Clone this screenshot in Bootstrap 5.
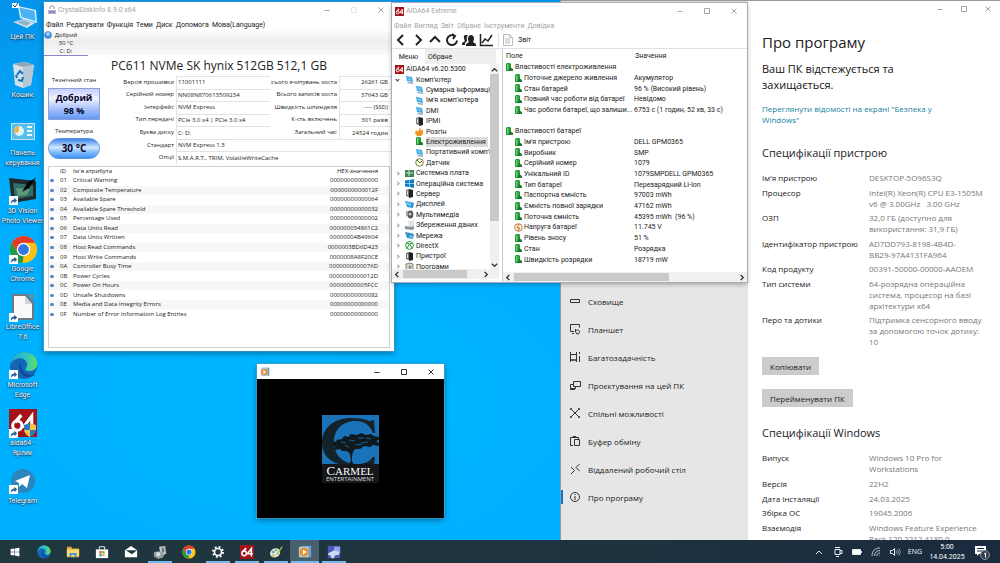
<!DOCTYPE html>
<html lang="uk">
<head>
<meta charset="utf-8">
<meta name="viewport" content="width=device-width, initial-scale=1">
<title>Робочий стіл</title>
<link href="https://cdn.jsdelivr.net/npm/bootstrap@5.3.0/dist/css/bootstrap.min.css" rel="stylesheet">
<style>
body{font-family:"Open Sans","Noto Sans",sans-serif;font-size:8px;line-height:11px;color:#222;background:#00aeff;overflow:hidden}
button{font:inherit;color:inherit;background:none;border:0;padding:0}
svg{display:block;flex:none}
.desk{background:radial-gradient(ellipse at 30% 75%,#00b6ff 0,#00aeff 45%,#0595ec 75%,#0d84d6 100%)}
.shortcuts{width:45px;top:3px;left:0}
.shortcut{height:58px;font:7px/10px Roboto,sans-serif;color:#fff;text-shadow:0 1px 2px #024,0 0 1px #024;text-align:center;text-decoration:none}
.shortcut svg{width:30px;height:29px}
.win{position:absolute;background:#fff;box-shadow:0 0 0 1px #7aa3bd66,0 2px 6px #0006}
.caption{height:16px}
.caption .wbtn{width:27px;height:16px;display:flex;align-items:center;justify-content:center}
.wbtn svg{width:8px;height:8px;fill:none;stroke:currentColor}
.dim{color:#a4a4a4}

/* disk information window */
.disk{left:44px;top:2px;width:350px;height:349px;font-size:6px;line-height:9px}
.menus{font:7px/14px Roboto,sans-serif;height:13px;gap:3px;padding-left:2px}
.drives{height:24px;background:linear-gradient(#fbfbfb,#eee 45%,#f9f9f9)}
.drive{width:44px;line-height:8px;font-size:6px;border-bottom:1px solid #8a86c8!important}
.model{font-size:12px;line-height:21px;height:21px}
.health{width:52px;height:32px;font-weight:700;font-size:9px;line-height:13px;color:#05052a;border:1px solid #8d9fd8;background:linear-gradient(#c5cffc,#f1f3ff 32%,#b4c9fc 60%,#6299f3)}
.temper{width:52px;height:21px;font-weight:700;font-size:10px;color:#05052a;border:1px solid #5d92dd;border-radius:11px;background:linear-gradient(#3f86e8,#cfe6ff 45%,#7fbcfb 70%,#3c92f2)}
.fields{display:grid;grid-template-columns:71px 94px 67px 52px;grid-template-rows:repeat(7,1fr);height:88px;column-gap:1px}
.fields label{text-align:right;white-space:nowrap;overflow:hidden;align-self:center;padding-right:1px;direction:rtl}
.fields input{border:solid #e3e3e3;border-width:1px 0 0 1px;padding:0 3px 0 1px;min-width:0;width:100%;font-size:6px;color:#222;background:#fff;outline:0}
.fields .wide{grid-column:2/5}
.num{text-align:right}
.attrs{border:1px solid #ccd0d6;height:182px;margin:2px 4px 0}
.attrs table{width:100%;height:152px;border-collapse:collapse}
.attrs td,.attrs th{padding:0;font-weight:400}
.attrs tbody tr:nth-child(even){background:#f7f7f7}
.attrs td:first-child::before{content:"";display:block;width:4px;height:3px;margin-left:1px;border-radius:2px;background:#4b86cf}
.attrs td:last-child,.attrs th:last-child{text-align:right;padding-right:11px}

/* system information window */
.aida{left:392px;top:3px;width:355px;height:279px;font:7px/10px Roboto,"Open Sans",sans-serif;box-shadow:0 0 0 1px #aab,0 2px 5px #0005}
.tools{height:17px}
.tools button svg{width:14px;height:14px;fill:none;stroke:#222;stroke-width:2}
.treebox{width:111px;border-right:1px solid #ccc}
.tabs button{height:15px}
.tabs .other{background:#efefef;width:71px;text-align:left;padding-left:3px}
.tree{display:grid;grid-template-rows:repeat(20,1fr);height:208px;margin:0;padding:0;list-style:none;white-space:nowrap}
.tree li{display:flex;align-items:center;gap:2px;padding-left:14px;min-width:0}
.tree .top1{padding-left:3px}
.tree .kid{padding-left:23px}
.tree .node::before{content:"";width:3px;height:3px;border:solid #999;border-width:1px 1px 0 0;transform:rotate(45deg);margin:0 4px 0 -10px}
.tree .open::before{transform:rotate(135deg);border-color:#333}
.tree svg,.props svg{width:9px;height:9px}
.tree .sel span{background:#dcdcdc;padding-right:2px}
.vbar{width:9px;background:#f0f0f0}
.thumb{background:#c9c9c9}
.bar svg,.vbar svg{width:7px;height:7px;fill:none;stroke:#333;stroke-width:1.6}
.bar{height:10px;background:#f0f0f0;padding:1px 2px}
.props{width:100%;height:203px;border-collapse:collapse}
.props td,.props th{padding:0;font-weight:400;white-space:nowrap}
.props td:first-child{width:131px}
.cellin{display:flex;align-items:center;gap:1px;padding-left:11px;height:10px}
.cellin.grp{padding-left:2px}

/* player */
.player{left:257px;top:364px;width:187px;height:154px}
.player .caption{height:15px;color:#333}

/* settings */
.settings{left:561px;right:0;top:1px;bottom:0;box-shadow:0 0 0 1px #999}
.side{width:187px;background:#e6e6e6;padding-top:286px}
.side a{height:28px;padding-left:8px;gap:7px;color:#1c1c1c;text-decoration:none}
.side svg{width:12px;height:12px;fill:none;stroke:#333;stroke-width:1}
.side .now{background:linear-gradient(#0078d7,#0078d7) left/2px 14px no-repeat}
.about{padding-left:14px;min-width:0}
.about .wbtn{width:24px}
.about h1{font-size:15px;line-height:24px;font-weight:400;margin:13px 0 7px}
.about h2{font-size:11px;line-height:16px;font-weight:400;margin:0}
.about .sub{font-size:11px;line-height:16px;color:#111;margin:0;width:150px}
.about .lnk{color:#16809f;text-decoration:none;width:180px;margin:10px 0 20px}
.spec{display:grid;grid-template-columns:107px 118px;align-content:space-between;margin:0}
.spec dt{font-weight:400;color:#222}
.spec dd{margin:0;color:#777}
.grey{background:#ccc;height:18px;padding:0 8px}

/* taskbar */
.task{height:23px;background:linear-gradient(90deg,#20373f,#1d3440 60%,#1a2a3f);color:#fff;font:7px/10px "Open Sans",sans-serif}
.task .app{width:29px;height:23px;display:flex;align-items:center;justify-content:center}
.task .app svg{width:14px;height:14px}
.task .run{background:linear-gradient(#76b9ed,#76b9ed) bottom/24px 2px no-repeat}
.task .active{background:linear-gradient(#76b9ed,#76b9ed) bottom/28px 2px no-repeat,#47606c}
.tray{gap:7px;padding-right:10px}
.tray svg{width:12px;height:12px;fill:none;stroke:#e8eef2;stroke-width:1}
.clock{width:36px;font-family:Roboto,sans-serif;text-align:center}
</style>
</head>
<body class="vh-100 d-flex flex-column">
<svg width="0" height="0" class="position-absolute" aria-hidden="true"><defs>
<symbol id="min" viewBox="0 0 8 8"><path d="M1.500 4.500h5"/></symbol>
<symbol id="max" viewBox="0 0 8 8"><path d="M1.500 1.500h5v5h-5z"/></symbol>
<symbol id="cls" viewBox="0 0 8 8"><path d="M1.500 1.500l5 5m0-5l-5 5"/></symbol>
<symbol id="arr" viewBox="0 0 10 10"><path d="M0 0h10v10H0z" fill="#fff"/><path d="M2 9c0-4 2-5 4-5V2l3 3-3 3V6C4 6 3 7 2 9z" fill="#2a5a94"/></symbol>
<symbol id="chrome" viewBox="0 0 32 32"><circle cx="16" cy="16" r="15" fill="#fbc116"/><path d="M3 8.500A15 15 0 0 1 29 8.500H16l-6.500 11z" fill="#e33b2e"/><path d="M3 8.500L9.500 19.500 16 23l-1 8A15 15 0 0 1 3 8.500z" fill="#249a48"/><circle cx="16" cy="16" r="7.500" fill="#fff"/><circle cx="16" cy="16" r="6" fill="#3477e0"/></symbol>
<symbol id="edge" viewBox="0 0 32 32"><defs><linearGradient id="eg"><stop stop-color="#20a6e0"/><stop offset=".6" stop-color="#2fc6c0"/><stop offset="1" stop-color="#6ade58"/></linearGradient></defs><circle cx="16" cy="16" r="15" fill="#1565b8"/><path d="M1 17C1 7 8 1 16 1c9 0 15 6 15 13 0 5-4 8-8 8-3 0-5-1-5-2s2-2 2-5c0-4-4-7-8-7C6 8 2 12 1 17z" fill="url(#eg)"/><path d="M13 13c-4 5-1 15 8 16 3 0 6-1 8-4-3 2-7 2-10 0-4-2-6-6-6-12z" fill="#0f4a94"/></symbol>
<symbol id="a64" viewBox="0 0 32 32"><path d="M0 0h32v32H0z" fill="#a3131a"/><path d="M14 7L7 15" stroke="#fff" stroke-width="4" fill="none"/><circle cx="9.500" cy="19" r="5.300" fill="none" stroke="#fff" stroke-width="3.500"/><path d="M26 26V8L17 20h12" fill="none" stroke="#fff" stroke-width="3.500"/></symbol>
<symbol id="bat" viewBox="0 0 9 9"><path d="M1 1l1-1h3l1 1v7H1z" fill="#239b3b"/><path d="M2 1h1.500v6H2z" fill="#65d36c"/><path d="M5 4l3 2v2H3z" fill="#1d7a35"/></symbol>
<symbol id="pc" viewBox="0 0 9 9"><path d="M1 1l6 1 1 5-6-1z" fill="#38a5e4"/><path d="M2 2l4 .7.6 3L3 5z" fill="#6cc0ee"/><path d="M3 7l5 .5V9L2 8z" fill="#98a5b0"/></symbol>
<symbol id="srv" viewBox="0 0 9 9"><path d="M1 1l3-1v8L1 7z" fill="#777"/><path d="M4 0l4 1v7l-4 1z" fill="#222"/><path d="M2 2h1v4H2z" fill="#ddd"/></symbol>
<symbol id="wmp" viewBox="0 0 16 16"><path d="M4 1h11v13H4z" fill="#6aa0cf"/><path d="M1 2h11v12H1z" fill="#b8cad8"/><circle cx="7" cy="8" r="5" fill="#ec8d24"/><path d="M5.500 5v6l4.500-3z" fill="#fff"/></symbol>
</defs></svg>

<main class="desk flex-fill position-relative overflow-hidden">
  <nav class="shortcuts position-absolute d-flex flex-column" aria-label="Ярлики">
    <a href="#" class="shortcut d-flex flex-column align-items-center"><svg viewBox="0 0 30 29"><path d="M10 3l18 4 1 13-17-5z" fill="#d9f1ff"/><path d="M11.500 4.500l15 3.500 1 10-14-4z" fill="#4ab2f2"/><path d="M5 19l11-3 11 4-8 5z" fill="#d5e3ec"/><path d="M8 19l8-2 7 3-5 3z" fill="#8fb4cd"/><path d="M4 0h7v5H4z" fill="#fff"/><path d="M5 2l2 2 3-4" fill="none" stroke="#246"/></svg>Цей ПК</a>
    <a href="#" class="shortcut d-flex flex-column align-items-center"><svg viewBox="0 0 30 29"><path d="M5 3l12-2 9 3-3 20-8 3-8-3z" fill="#d3e2ea"/><path d="M5 3l10 3 11-2-9-3z" fill="#8fa7b5"/><path d="M15 6l11-2-3 20-8 3z" fill="#b5c9d5"/><path d="M9 14l3-4 3 3m0 3l-1 4-4-1m-1-2l-1-3" fill="none" stroke="#1873ba" stroke-width="2"/></svg>Кошик</a>
    <a href="#" class="shortcut d-flex flex-column align-items-center"><svg viewBox="0 0 30 29"><path d="M3 4h24v17H3z" fill="#b9e5fa"/><path d="M4 5h22v15H4z" fill="#58bdec"/><circle cx="11" cy="12" r="5" fill="#dff3fd"/><path d="M11 12V7a5 5 0 0 0-4 8z" fill="#f0b440"/><path d="M19 8h5m-5 4h5m-5 4h5" stroke="#e5f7ff" stroke-width="2"/></svg>Панель керування</a>
    <a href="#" class="shortcut d-flex flex-column align-items-center"><svg viewBox="0 0 30 29"><path d="M1 1l27 3v18L4 26z" fill="#20292a"/><path d="M5 6l20 2v11L7 22z" fill="#2f6f68"/><path d="M8 11l14 1-3 6-9 1z" fill="#5d9a78"/><path d="M28 1l-8 4-6 10 7-4z" fill="#050505"/><use href="#arr" x="1" y="19" width="9" height="9"/></svg>3D Vision<br>Photo Viewer</a>
    <a href="#" class="shortcut d-flex flex-column align-items-center"><svg viewBox="0 0 30 29"><use href="#chrome" x="1" width="29" height="29"/><use href="#arr" x="1" y="20" width="9" height="9"/></svg>Google<br>Chrome</a>
    <a href="#" class="shortcut d-flex flex-column align-items-center"><svg viewBox="0 0 30 29"><path d="M4 1h15l7 8v18H4z" fill="#707a80"/><path d="M6 3h11l7 8v14H6z" fill="#fafafa"/><path d="M17 3l7 8h-7z" fill="#cdd3d6"/><path d="M20 1h6v6z" fill="#5c8ca8"/><use href="#arr" x="1" y="20" width="9" height="9"/></svg>LibreOffice<br>7.6</a>
    <a href="#" class="shortcut d-flex flex-column align-items-center"><svg viewBox="0 0 30 29"><use href="#edge" x="1" width="29" height="29"/><use href="#arr" x="1" y="19" width="9" height="9"/></svg>Microsoft<br>Edge</a>
    <a href="#" class="shortcut d-flex flex-column align-items-center"><svg viewBox="0 0 30 29"><use href="#a64" x="1" width="28" height="28"/><path d="M16 16l6-2v7h-6z" fill="#2f79c0"/><path d="M22 14l6 2v5h-6z" fill="#f5c24d"/><path d="M16 21h6v7q-5-2-6-7z" fill="#f5c24d"/><path d="M22 21h6q-1 5-6 7z" fill="#2f79c0"/><use href="#arr" x="1" y="20" width="9" height="9"/></svg>aida64 -<br>Ярлик</a>
    <a href="#" class="shortcut d-flex flex-column align-items-center"><svg viewBox="0 0 30 29"><circle cx="15" cy="14" r="12" fill="#2b86bb"/><path d="M7 14l15-6-3 13-5-4-3 3v-4z" fill="#fff"/><use href="#arr" x="1" y="18" width="9" height="9"/></svg>Telegram</a>
  </nav>

  <section class="win settings d-flex" aria-label="Параметри">
    <nav class="side d-flex flex-column flex-shrink-0">
      <a href="#" class="d-flex align-items-center"><svg viewBox="0 0 12 12"><path d="M1.500 4.500h9v3h-9z"/></svg>Сховище</a>
      <a href="#" class="d-flex align-items-center"><svg viewBox="0 0 12 12"><path d="M5 8.500H1.500v-7h9v3M3 10.500h2M6.500 9V6m0 2.500c0-2 4-2 4 0s-1 3-2.500 2.500z"/></svg>Планшет</a>
      <a href="#" class="d-flex align-items-center"><svg viewBox="0 0 12 12"><path d="M1.500 1v2.500h6V1M1.500 11V9h6v2M1.500 3.500h6V9h-6zM10.500 1v2m0 2v6"/></svg>Багатозадачність</a>
      <a href="#" class="d-flex align-items-center"><svg viewBox="0 0 12 12"><path d="M4.500 2.500h7v5h-7zM4 5.500H1.500v4h5V8M1 10.500h5"/></svg>Проєктування на цей ПК</a>
      <a href="#" class="d-flex align-items-center"><svg viewBox="0 0 12 12"><path d="M2 2l8 8M10 2l-8 8"/><path d="M1.500 1.500h1v1h-1zm8 0h1v1h-1zm0 8h1v1h-1zm-8 0h1v1h-1zM5.500 5.500h1v1h-1z"/></svg>Спільні можливості</a>
      <a href="#" class="d-flex align-items-center"><svg viewBox="0 0 12 12"><path d="M4 10.500H1.500v-8h8V4M4 2.500v-1h3v1M5.500 4.500h5v6h-5z"/></svg>Буфер обміну</a>
      <a href="#" class="d-flex align-items-center"><svg viewBox="0 0 12 12"><path d="M2 4l3.500 3.500L2 11M10.500 1L7 4.500 10.500 8"/></svg>Віддалений робочий стіл</a>
      <a href="#" class="d-flex align-items-center now" aria-current="page"><svg viewBox="0 0 12 12"><circle cx="6" cy="6" r="4.500"/><path d="M6 5v4M6 3v1"/></svg>Про програму</a>
    </nav>
    <div class="about flex-fill">
      <div class="caption d-flex justify-content-end dim"><button class="wbtn" aria-label="Згорнути"><svg><use href="#min"/></svg></button><button class="wbtn" aria-label="Розгорнути"><svg><use href="#max"/></svg></button><button class="wbtn" aria-label="Закрити"><svg><use href="#cls"/></svg></button></div>
      <h1>Про програму</h1>
      <p class="sub">Ваш ПК відстежується та захищається.</p>
      <a href="#" class="lnk d-block">Переглянути відомості на екрані "Безпека у Windows"</a>
      <h2>Специфікації пристрою</h2>
      <dl class="spec" style="height:175px;margin-top:11px">
        <dt>Ім'я пристрою</dt><dd>DESKTOP-5O96S3Q</dd>
        <dt>Процесор</dt><dd>Intel(R) Xeon(R) CPU E3-1505M v6 @ 3.00GHz &nbsp; 3.00 GHz</dd>
        <dt>ОЗП</dt><dd>32,0 ГБ (доступно для<br>використання: 31,9 ГБ)</dd>
        <dt>Ідентифікатор пристрою</dt><dd>AD7DD793-8198-4B4D-<br>BB29-97A4131FA964</dd>
        <dt>Код продукту</dt><dd>00391-50000-00000-AAOEM</dd>
        <dt>Тип системи</dt><dd>64-розрядна операційна<br>система, процесор на базі<br>архітектури x64</dd>
        <dt>Перо та дотики</dt><dd>Підтримка сенсорного вводу<br>за допомогою точок дотику:<br>10</dd>
      </dl>
      <div class="d-flex flex-column align-items-start" style="gap:14px;margin:10px 0 18px"><button class="grey">Копіювати</button><button class="grey">Перейменувати ПК</button></div>
      <h2>Специфікації Windows</h2>
      <dl class="spec" style="height:92px;margin-top:11px">
        <dt>Випуск</dt><dd>Windows 10 Pro for<br>Workstations</dd>
        <dt>Версія</dt><dd>22H2</dd>
        <dt>Дата інсталяції</dt><dd>24.03.2025</dd>
        <dt>Збірка ОС</dt><dd>19045.2006</dd>
        <dt>Взаємодія</dt><dd>Windows Feature Experience<br>Pack 120.2212.4180.0</dd>
      </dl>
    </div>
  </section>

  <section class="win disk" aria-label="CrystalDiskInfo">
    <div class="caption d-flex align-items-center dim" style="font:7px/10px Roboto,sans-serif"><svg width="10" height="10" viewBox="0 0 10 10" style="margin:0 1px 0 3px"><path d="M3 4V2q2-3 4 0v2" fill="none" stroke="#98a"/><path d="M1 5h8v4H1z" fill="#b9b3dc"/><path d="M2 7h6" stroke="#66a"/></svg><span class="flex-fill">CrystalDiskInfo 8.9.0 x64</span><button class="wbtn" aria-label="Згорнути"><svg><use href="#min"/></svg></button><button class="wbtn opacity-25" aria-label="Розгорнути"><svg><use href="#max"/></svg></button><button class="wbtn" aria-label="Закрити"><svg><use href="#cls"/></svg></button></div>
    <div class="menus d-flex"><button>Файл</button><button>Редагувати</button><button>Функція</button><button>Теми</button><button>Диск</button><button>Допомога</button><button>Мова(Language)</button></div>
    <div class="drives"><button class="drive text-center position-relative"><svg class="position-absolute top-0 start-0" width="8" height="8" viewBox="0 0 8 8"><circle cx="4" cy="4" r="3.800" fill="#3e8ad6"/><circle cx="4" cy="3" r="2" fill="#9fd0f8"/></svg>Добрий<br>30 °C<br>C: D:</button></div>
    <div class="model text-center">PC611 NVMe SK hynix 512GB 512,1 GB</div>
    <div class="d-flex" style="padding:0 4px">
      <div class="d-flex flex-column align-items-center"><span>Технічний стан</span><button class="health" style="margin:3px 0 7px">Добрий<br>98 %</button><span>Температура</span><button class="temper" style="margin-top:2px">30 °C</button></div>
      <div class="fields flex-fill" style="margin-left:4px">
        <label for="f1">Версія прошивки</label><input id="f1" readonly value="11001111"><label for="g1">Всього зчитувань хоста</label><input id="g1" class="num" readonly value="26261 GB">
        <label for="f2">Серійний номер</label><input id="f2" readonly value="NN08N870613509234"><label for="g2">Всього записів хоста</label><input id="g2" class="num" readonly value="37643 GB">
        <label for="f3">Інтерфейс</label><input id="f3" readonly value="NVM Express"><label for="g3">Швидкість шпинделя</label><input id="g3" class="num" readonly value="---- (SSD)">
        <label for="f4">Тип передачі</label><input id="f4" readonly value="PCIe 3.0 x4 | PCIe 3.0 x4"><label for="g4">К-сть включень</label><input id="g4" class="num" readonly value="301 разів">
        <label for="f5">Буква диску</label><input id="f5" readonly value="C: D:"><label for="g5">Загальний час</label><input id="g5" class="num" readonly value="24524 годин">
        <label for="f6">Стандарт</label><input id="f6" class="wide" readonly value="NVM Express 1.3">
        <label for="f7">Опції</label><input id="f7" class="wide" readonly value="S.M.A.R.T., TRIM, VolatileWriteCache">
      </div>
    </div>
    <div class="attrs">
      <table>
        <colgroup><col style="width:11px"><col style="width:13px"><col><col></colgroup>
        <thead><tr><th></th><th>ID</th><th>Ім`я атрибута</th><th>HEX-значення</th></tr></thead>
        <tbody>
        <tr><td></td><td>01</td><td>Critical Warning</td><td>00000000000000</td></tr>
        <tr><td></td><td>02</td><td>Composite Temperature</td><td>0000000000012F</td></tr>
        <tr><td></td><td>03</td><td>Available Spare</td><td>00000000000064</td></tr>
        <tr><td></td><td>04</td><td>Available Spare Threshold</td><td>00000000000032</td></tr>
        <tr><td></td><td>05</td><td>Percentage Used</td><td>00000000000002</td></tr>
        <tr><td></td><td>06</td><td>Data Units Read</td><td>000000034861C2</td></tr>
        <tr><td></td><td>07</td><td>Data Units Written</td><td>00000004B49604</td></tr>
        <tr><td></td><td>08</td><td>Host Read Commands</td><td>0000003BD6D423</td></tr>
        <tr><td></td><td>09</td><td>Host Write Commands</td><td>0000008A8F20CE</td></tr>
        <tr><td></td><td>0A</td><td>Controller Busy Time</td><td>0000000000076D</td></tr>
        <tr><td></td><td>0B</td><td>Power Cycles</td><td>0000000000012D</td></tr>
        <tr><td></td><td>0C</td><td>Power On Hours</td><td>00000000005FCC</td></tr>
        <tr><td></td><td>0D</td><td>Unsafe Shutdowns</td><td>00000000000082</td></tr>
        <tr><td></td><td>0E</td><td>Media and Data Integrity Errors</td><td>00000000000000</td></tr>
        <tr><td></td><td>0F</td><td>Number of Error Information Log Entries</td><td>00000000000000</td></tr>
        </tbody>
      </table>
    </div>
  </section>

  <section class="win aida d-flex flex-column" aria-label="AIDA64 Extreme">
    <div class="caption d-flex align-items-center dim"><svg width="9" height="9" style="margin:0 2px 0 3px"><use href="#a64"/></svg><span class="flex-fill">AIDA64 Extreme</span><button class="wbtn" aria-label="Згорнути"><svg><use href="#min"/></svg></button><button class="wbtn" aria-label="Розгорнути"><svg><use href="#max"/></svg></button><button class="wbtn" aria-label="Закрити"><svg><use href="#cls"/></svg></button></div>
    <div class="menus d-flex dim"><button>Файл</button><button>Вигляд</button><button>Звіт</button><button>Обране</button><button>Інструменти</button><button>Довідка</button></div>
    <div class="tools d-flex align-items-center border-bottom">
      <div class="d-flex" style="gap:3px;padding-left:2px">
        <button aria-label="Назад"><svg viewBox="0 0 14 14"><path d="M9 2L4 7l5 5"/></svg></button>
        <button aria-label="Вперед"><svg viewBox="0 0 14 14"><path d="M5 2l5 5-5 5"/></svg></button>
        <button aria-label="Вгору"><svg viewBox="0 0 14 14"><path d="M2 9l5-5 5 5"/></svg></button>
        <button aria-label="Оновити"><svg viewBox="0 0 14 14"><path d="M9 2.500a5 5 0 1 0 3 5M7 1l3 2-2 3"/></svg></button>
        <button aria-label="Користувачі"><svg viewBox="0 0 14 14"><path d="M4 13v-2l3-2c-2-3-1-7 2-7s4 4 2 7l3 2v2zM3 2h3c-2 2-1 4-1 6l-2 2v2H0v-2l3-2C2 6 1 3 3 2z" fill="#222" stroke="none"/></svg></button>
        <button aria-label="Графік"><svg viewBox="0 0 14 14"><path d="M1.500 1v11.500H14M3 10l3-4 3 2 4-6" stroke-width="1.500"/></svg></button>
      </div>
      <button class="d-flex align-items-center border-start" style="gap:3px;margin-left:5px;padding-left:2px"><svg viewBox="0 0 14 14" style="stroke:#bbb;stroke-width:1"><path d="M2.500 1.500h6l3 3v8h-9zM8.500 1.500v3h3M4 6h5M4 8h5M4 10h5"/></svg>Звіт</button>
    </div>
    <div class="d-flex flex-fill" style="min-height:0">
      <div class="treebox d-flex flex-column flex-shrink-0">
        <div class="tabs d-flex" role="tablist"><button style="width:33px" role="tab" aria-selected="true">Меню</button><button class="other" role="tab">Обране</button></div>
        <div class="d-flex overflow-hidden" style="height:205px;margin-right:3px">
          <ul class="tree flex-fill overflow-hidden">
            <li class="top1"><svg><use href="#a64"/></svg>AIDA64 v6.20.5300</li>
            <li class="node open"><svg><use href="#pc"/></svg>Комп'ютер</li>
            <li class="kid"><svg><use href="#pc"/></svg>Сумарна інформація</li>
            <li class="kid"><svg><use href="#pc"/></svg>Ім'я комп'ютера</li>
            <li class="kid"><svg><use href="#pc"/></svg>DMI</li>
            <li class="kid"><svg><use href="#srv"/></svg>IPMI</li>
            <li class="kid"><svg viewBox="0 0 9 9"><path d="M1 3l2 2 2-5 1 4 2-2v5L6 9H2L0 6z" fill="#f49320"/></svg>Розгін</li>
            <li class="kid sel"><svg><use href="#bat"/></svg><span>Електроживлення</span></li>
            <li class="kid"><svg><use href="#pc"/></svg>Портативний комп'ютер</li>
            <li class="kid"><svg viewBox="0 0 9 9"><circle cx="4.500" cy="4.500" r="3.800" fill="#fafae0" stroke="#7a7a40"/><path d="M2 2l3 3 2-2" stroke="#383" fill="none"/></svg>Датчик</li>
            <li class="node"><svg viewBox="0 0 9 9"><path d="M0 1h9v7H0z" fill="#3f8258"/><path d="M1 4h7M4 1v6" stroke="#cfe8d4"/></svg>Системна плата</li>
            <li class="node"><svg viewBox="0 0 9 9"><path d="M0 1.500L4 1v3H0zM4.500 1L9 0v4H4.500zM0 4.500h4V8L0 7.500zM4.500 4.500H9V9L4.500 8z" fill="#0f7cc8"/></svg>Операційна система</li>
            <li class="node"><svg><use href="#srv"/></svg>Сервер</li>
            <li class="node"><svg viewBox="0 0 9 9"><path d="M0 1l6 1 3 1-1 5-6-1z" fill="#2e97dc"/><path d="M1 2l5 1v3L2 5z" fill="#7cc6f2"/></svg>Дисплей</li>
            <li class="node"><svg viewBox="0 0 9 9"><path d="M1 1h3v6L1 6z" fill="#aaa"/><ellipse cx="5.500" cy="4.500" rx="2.800" ry="4" fill="#555"/><circle cx="5" cy="4" r="1.500" fill="#ccc"/></svg>Мультимедіа</li>
            <li class="node"><svg viewBox="0 0 9 9"><path d="M3 0h6v6H4z" fill="#dde2e6"/><path d="M0 5l7 1 2-1v3L7 9 0 8z" fill="#8b9299"/></svg>Збереження даних</li>
            <li class="node"><svg viewBox="0 0 9 9"><path d="M0 1l6 1 3 1-1 5-6-1z" fill="#3a8fce"/><circle cx="6" cy="6" r="2" fill="#5fb7e8"/></svg>Мережа</li>
            <li class="node"><svg viewBox="0 0 9 9"><circle cx="4.500" cy="4.500" r="3.900" fill="#fff" stroke="#22983a"/><path d="M2 7l2.500-4L7 7M2 2l2.500 1L7 2" stroke="#22983a" fill="none"/></svg>DirectX</li>
            <li class="node"><svg><use href="#srv"/></svg>Пристрої</li>
            <li class="node"><svg viewBox="0 0 9 9"><path d="M1 2l4-1 3 1v6H1z" fill="#d8d4c8" stroke="#8a8372"/><circle cx="5" cy="5" r="1.500" fill="#888"/></svg>Програми</li>
          </ul>
          <div class="vbar d-flex flex-column align-items-center flex-shrink-0"><svg viewBox="0 0 8 8" style="margin:2px 0 1px"><path d="M1 6l3-3 3 3"/></svg><div class="thumb w-100" style="height:147px"></div><svg viewBox="0 0 8 8" class="mt-auto"><path d="M1 2l3 3 3-3"/></svg></div>
        </div>
        <div class="bar d-flex align-items-center" style="margin-right:3px"><svg viewBox="0 0 8 8"><path d="M5 1L2 4l3 3"/></svg><div class="thumb h-100" style="width:64px;margin-left:2px"></div><svg viewBox="0 0 8 8" class="ms-auto" style="margin-right:8px"><path d="M3 1l3 3-3 3"/></svg></div>
      </div>
      <div class="flex-fill d-flex flex-column" style="min-width:0">
        <div class="d-flex align-items-center" style="height:13px;padding-left:3px"><span style="width:129px">Поле</span><span>Значення</span></div>
        <table class="props"><tbody>
          <tr><td><div class="cellin grp"><svg><use href="#bat"/></svg>Властивості електроживлення</div></td><td></td></tr>
          <tr><td><div class="cellin"><svg><use href="#bat"/></svg>Поточне джерело живлення</div></td><td>Акумулятор</td></tr>
          <tr><td><div class="cellin"><svg><use href="#bat"/></svg>Стан батарей</div></td><td>96 % (Високий рівень)</td></tr>
          <tr><td><div class="cellin"><svg><use href="#bat"/></svg>Повний час роботи від батареї</div></td><td>Невідомо</td></tr>
          <tr><td><div class="cellin"><svg><use href="#bat"/></svg>Час роботи батареї, що залиши...</div></td><td>6753 с (1 годин, 52 хв, 33 с)</td></tr>
          <tr><td><div class="cellin"></div></td><td></td></tr>
          <tr><td><div class="cellin grp"><svg><use href="#bat"/></svg>Властивості батареї</div></td><td></td></tr>
          <tr><td><div class="cellin"><svg><use href="#bat"/></svg>Ім'я пристрою</div></td><td>DELL GPM0365</td></tr>
          <tr><td><div class="cellin"><svg><use href="#bat"/></svg>Виробник</div></td><td>SMP</td></tr>
          <tr><td><div class="cellin"><svg><use href="#bat"/></svg>Серійний номер</div></td><td>1079</td></tr>
          <tr><td><div class="cellin"><svg><use href="#bat"/></svg>Унікальний ID</div></td><td>1079SMPDELL GPM0365</td></tr>
          <tr><td><div class="cellin"><svg><use href="#bat"/></svg>Тип батареї</div></td><td>Перезарядний Li-Ion</td></tr>
          <tr><td><div class="cellin"><svg><use href="#bat"/></svg>Паспортна ємність</div></td><td>97003 mWh</td></tr>
          <tr><td><div class="cellin"><svg><use href="#bat"/></svg>Ємність повної зарядки</div></td><td>47162 mWh</td></tr>
          <tr><td><div class="cellin"><svg><use href="#bat"/></svg>Поточна ємність</div></td><td>45395 mWh &nbsp;(96 %)</td></tr>
          <tr><td><div class="cellin"><svg viewBox="0 0 9 9"><circle cx="4.500" cy="4.500" r="3.800" fill="#fff5e5" stroke="#c07d3c"/><path d="M5 1L3 5h3L4 8" stroke="#c06a20" fill="none"/></svg>Напруга батареї</div></td><td>11.745 V</td></tr>
          <tr><td><div class="cellin"><svg><use href="#bat"/></svg>Рівень зносу</div></td><td>51 %</td></tr>
          <tr><td><div class="cellin"><svg><use href="#bat"/></svg>Стан</div></td><td>Розрядка</td></tr>
          <tr><td><div class="cellin"><svg><use href="#bat"/></svg>Швидкість розрядки</div></td><td>18719 mW</td></tr>
        </tbody></table>
        <div class="bar d-flex align-items-center mt-auto"><svg viewBox="0 0 8 8"><path d="M5 1L2 4l3 3"/></svg><div class="thumb h-100" style="width:155px;margin-left:2px"></div><svg viewBox="0 0 8 8" class="ms-auto"><path d="M3 1l3 3-3 3"/></svg></div>
      </div>
    </div>
  </section>

  <section class="win player d-flex flex-column" aria-label="Програвач">
    <div class="caption d-flex align-items-center"><svg width="10" height="10" style="margin-left:3px"><use href="#wmp"/></svg><button class="wbtn ms-auto" aria-label="Згорнути"><svg><use href="#min"/></svg></button><button class="wbtn" aria-label="Розгорнути"><svg><use href="#max"/></svg></button><button class="wbtn" aria-label="Закрити"><svg><use href="#cls"/></svg></button></div>
    <div class="bg-black flex-fill d-flex justify-content-center align-items-center">
      <svg width="57" height="68" viewBox="0 0 57 68"><path d="M0 0h57v68H0z" fill="#15171b"/><path d="M0 0h57v49H0z" fill="#1a72b8"/>
        <path d="M52 5l1 13h-2C48 10 42 6 34 6 21 6 12 14 12 27c0 12 7 20 19 22H17C6 46 0 38 0 28 0 12 13 3 29 3c8 0 14 1 18 3 2 0 3 0 3-1zM53 42l-1 7H36c6 0 11-2 15-7z" fill="#14222c"/>
        <path d="M10 28l5-2-1-1 6-1 2-3 5 1 1-3 7 1 4-2 5 2 5-1 3 2 5 1v3l-3 1 3 2v3l-6-1-3 2-6-1-4 3-5 0-2 3-1 4 0 5 2 4H27l2-5-1-6-3-3-5 0-2-2-6 1 1-3z" fill="#10191e"/>
        <path d="M19 27l5 1m3-3l6 1m3-3l6 0m-3 5l7-1M23 30l4 2m7-2l6-1m4-6l5 1" fill="none" stroke="#1a72b8" stroke-width=".8"/>
        <text x="28" y="60" text-anchor="middle" font-family="Liberation Serif" font-size="13" fill="#fff">C<tspan font-size="11">ARMEL</tspan></text><text x="28" y="66" text-anchor="middle" font-family="Open Sans" font-size="6" fill="#ddd">ENTERTAINMENT</text></svg>
    </div>
  </section>
</main>

<footer class="task d-flex align-items-center flex-shrink-0">
  <button class="app" aria-label="Пуск"><svg viewBox="0 0 16 16"><path d="M3 4.500L7.500 4v3.700H3zM8 4l5-1v4.700H8zM3 8.300h4.500V12L3 11.500zM8 8.300h5V13l-5-1z" fill="#fff"/></svg></button>
  <button class="app" aria-label="Edge"><svg><use href="#edge"/></svg></button>
  <button class="app" aria-label="Провідник"><svg viewBox="0 0 16 16"><path d="M1 2h5l1 2h8v10H1z" fill="#e0a93a"/><path d="M1 5h14v8H1z" fill="#fbd970"/><path d="M4 9h8v5h-2v-3H6v3H4z" fill="#3d93d4"/></svg></button>
  <button class="app" aria-label="Store"><svg viewBox="0 0 16 16"><path d="M1 5h14v10H1z" fill="#fff"/><path d="M5 5V2h6v3" fill="none" stroke="#fff"/><path d="M5 7h2.700v2.700H5z" fill="#e8502a"/><path d="M8.300 7H11v2.700H8.300z" fill="#78b82a"/><path d="M5 10.300h2.700V13H5z" fill="#2a9fe0"/><path d="M8.300 10.300H11V13H8.300z" fill="#f5b82a"/></svg></button>
  <button class="app" aria-label="Пошта"><svg viewBox="0 0 16 16"><path d="M1 6l7-5 7 5v8H1z" fill="#fff"/><path d="M2 6h13l-6 4.500z" fill="#20373f"/></svg></button>
  <button class="app run" aria-label="Диски"><svg viewBox="0 0 16 16"><path d="M7 2l7-1 1 9-6 3z" fill="#c3c7cb"/><path d="M10 3l3 0v5l-3 1z" fill="#777d85"/><path d="M1 8l6-1 5 3v4l-6 2-5-3z" fill="#969ca2"/><circle cx="6" cy="10.500" r="2.500" fill="#d9dcdf"/></svg></button>
  <button class="app" aria-label="Chrome"><svg><use href="#chrome"/></svg></button>
  <button class="app run" aria-label="Параметри"><svg viewBox="0 0 16 16"><circle cx="8" cy="8" r="4" fill="none" stroke="#fff" stroke-width="1.800"/><circle cx="8" cy="8" r="5.800" fill="none" stroke="#fff" stroke-width="2" stroke-dasharray="2.200 2.355"/></svg></button>
  <button class="app run" aria-label="AIDA64"><svg><use href="#a64"/></svg></button>
  <button class="app run" aria-label="Paint"><svg viewBox="0 0 16 16"><ellipse cx="7" cy="9" rx="6" ry="5" transform="rotate(-30 7 9)" fill="#dfe5d0"/><circle cx="5" cy="8" r="1.300" fill="#3b8fd0"/><circle cx="8" cy="6" r="1.200" fill="#5aa63c"/><circle cx="5" cy="12" r="1.200" fill="#d8a02a"/><path d="M15 2l-6 9" stroke="#a9c64f" stroke-width="1.500"/></svg></button>
  <button class="app active" aria-label="Програвач"><svg><use href="#wmp"/></svg></button>
  <button class="app run" aria-label="CrystalDiskInfo"><svg viewBox="0 0 16 16"><path d="M1 1h14v14H1z" fill="#4658b8"/><path d="M8 2h7v7L8 8z" fill="#8fa2ef"/><path d="M2 9l6-3 6 2v3l-5 1-1 3H5l-1-3-3-1z" fill="#cdd8f0"/></svg></button>
  <div class="tray d-flex align-items-center ms-auto">
    <button aria-label="Приховані піктограми"><svg viewBox="0 0 12 12"><path d="M3 8l3-3 3 3"/></svg></button>
    <svg viewBox="0 0 12 12"><path d="M3 3.500h5v5H3zM8 4.500h2v3H8M3 1.500h5M4 10.500h3"/></svg>
    <svg viewBox="0 0 12 12"><path d="M1.500 3.500h8v5h-8z" fill="#fff"/><path d="M10.500 5v2"/></svg>
    <svg viewBox="0 0 12 12"><path d="M2 10c0-5 3-8 8-8M4.500 10c0-3 2-5.500 5.500-5.500M7 10c0-2 1-3 3-3M9.500 9.500h.5" opacity=".8"/></svg>
    <svg viewBox="0 0 12 12"><path d="M1.500 4.500h2l2-2v7l-2-2h-2z"/><path d="M7 4.500q1 1.500 0 3M8.500 3.500q2 2.500 0 5M10 2.500q2.500 3.500 0 7" opacity=".55"/></svg>
    <span>ENG</span>
    <time class="clock">5:00<br>14.04.2025</time>
    <button aria-label="Сповіщення" style="margin-left:2px"><svg viewBox="0 0 16 16" style="width:16px;height:16px;stroke:none"><path d="M1 2h11v8H5l-2 2v-2H1z" fill="#fff"/><path d="M3 4.500h7M3 7h7" stroke="#1a2a3f"/><circle cx="11" cy="11" r="4.500" fill="#33404f" stroke="#8a95a0"/><path d="M10 10l1.500-1v4.500" stroke="#fff" fill="none"/></svg></button>
  </div>
</footer>
<script src="https://cdn.jsdelivr.net/npm/bootstrap@5.3.0/dist/js/bootstrap.bundle.min.js"></script>
</body>
</html>
